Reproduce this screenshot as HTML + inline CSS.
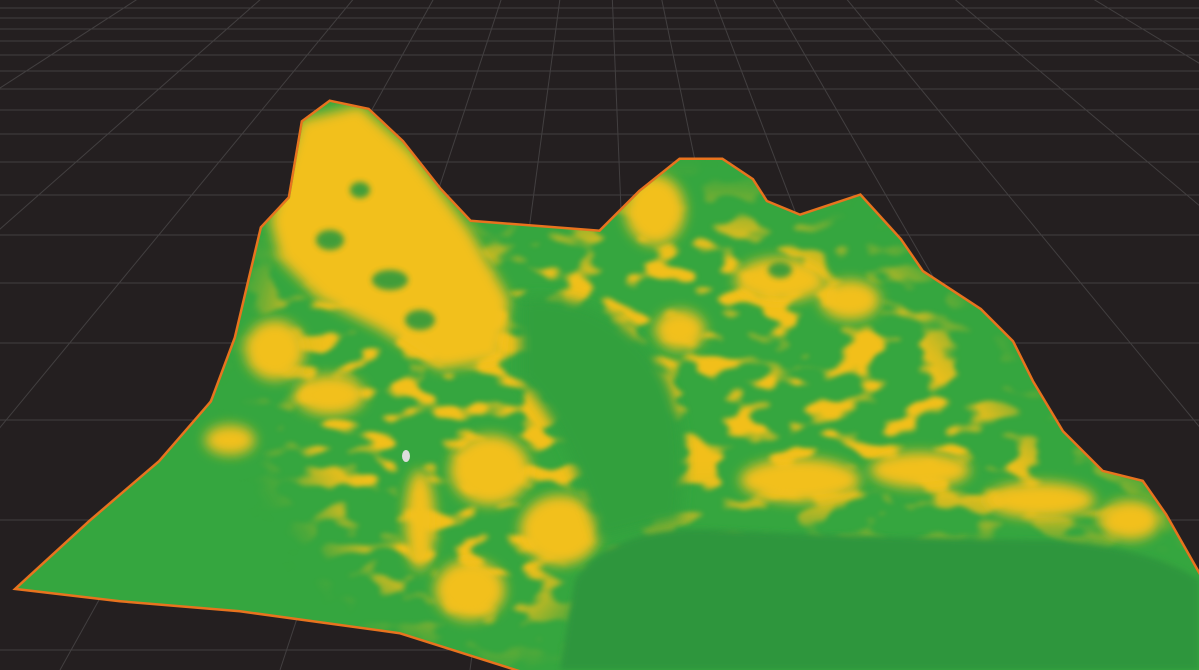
<!DOCTYPE html>
<html><head><meta charset="utf-8"><style>
html,body{margin:0;padding:0;width:1199px;height:670px;overflow:hidden;background:#241f20}
svg{display:block}
</style></head><body>
<svg width="1199" height="670" viewBox="0 0 1199 670" xmlns="http://www.w3.org/2000/svg">
<defs>
<filter id="b" x="-20%" y="-20%" width="140%" height="140%"><feGaussianBlur stdDeviation="6"/></filter>
<filter id="b2" x="-20%" y="-20%" width="140%" height="140%"><feGaussianBlur stdDeviation="3"/></filter>
<filter id="bb" x="-20%" y="-20%" width="140%" height="140%"><feGaussianBlur stdDeviation="25"/></filter>
<filter id="n" x="0" y="0" width="100%" height="100%" color-interpolation-filters="sRGB">
<feTurbulence type="fractalNoise" baseFrequency="0.025 0.045" numOctaves="2" seed="4"/>
<feColorMatrix type="matrix" values="0 0 0 0 0.95  0 0 0 0 0.75  0 0 0 0 0.1  0 0 0 8 -4.2"/>
<feGaussianBlur stdDeviation="2"/>
</filter>
<clipPath id="t"><path id="tp" d="M18,588 L90,522 L160,462 L212,402 L236,338 L262,228 L290,198 L303,122 L330,102 L368,110 L402,142 L440,190 L470,222 L600,232 L640,192 L680,160 L722,160 L752,180 L766,202 L800,216 L860,196 L900,240 L922,272 L980,310 L1012,342 L1032,382 L1062,432 L1102,472 L1142,482 L1165,515 L1199,575 L1199,670 L520,670 L400,632 L240,610 L120,600 Z"/></clipPath>
<mask id="tex"><rect width="1199" height="670" fill="#000"/><path filter="url(#bb)" fill="#fff" d="M270,270 L520,240 L640,210 L760,210 L900,270 L1040,440 L1199,540 L1199,530 L700,520 L600,540 L530,640 L380,600 L280,440 Z"/></mask>
</defs>
<rect width="1199" height="670" fill="#241f20"/>
<g stroke="#4a4748" stroke-width="1" fill="none" opacity="0.8">
<line x1="0" y1="8" x2="1199" y2="8"/><line x1="0" y1="18" x2="1199" y2="18"/><line x1="0" y1="29" x2="1199" y2="29"/>
<line x1="0" y1="41" x2="1199" y2="41"/><line x1="0" y1="55" x2="1199" y2="55"/><line x1="0" y1="71" x2="1199" y2="71"/>
<line x1="0" y1="89" x2="1199" y2="89"/><line x1="0" y1="110" x2="1199" y2="110"/><line x1="0" y1="134" x2="1199" y2="134"/>
<line x1="0" y1="162" x2="1199" y2="162"/><line x1="0" y1="195" x2="1199" y2="195"/><line x1="0" y1="235" x2="1199" y2="235"/>
<line x1="0" y1="283" x2="1199" y2="283"/><line x1="0" y1="343" x2="1199" y2="343"/><line x1="0" y1="420" x2="1199" y2="420"/>
<line x1="0" y1="520" x2="1199" y2="520"/><line x1="0" y1="650" x2="1199" y2="650"/>
<line x1="600" y1="-300" x2="-1400" y2="670"/><line x1="600" y1="-300" x2="-900" y2="670"/><line x1="600" y1="-300" x2="-500" y2="670"/>
<line x1="600" y1="-300" x2="-200" y2="670"/><line x1="600" y1="-300" x2="60" y2="670"/><line x1="600" y1="-300" x2="280" y2="670"/>
<line x1="600" y1="-300" x2="470" y2="670"/><line x1="600" y1="-300" x2="640" y2="670"/><line x1="600" y1="-300" x2="800" y2="670"/>
<line x1="600" y1="-300" x2="970" y2="670"/><line x1="600" y1="-300" x2="1160" y2="670"/><line x1="600" y1="-300" x2="1400" y2="670"/>
<line x1="600" y1="-300" x2="1750" y2="670"/><line x1="600" y1="-300" x2="2200" y2="670"/><line x1="600" y1="-300" x2="2800" y2="670"/>
</g>
<use href="#tp" fill="none" stroke="#e8731e" stroke-width="5"/>
<g clip-path="url(#t)">
<rect width="1199" height="670" fill="#35a63f"/>
<g mask="url(#tex)"><rect width="1199" height="670" filter="url(#n)"/></g>
<g filter="url(#b)" fill="#f2c01c">
<path d="M300,120 L360,105 L410,150 L470,230 L510,300 L500,360 L440,370 L380,330 L320,300 L280,260 L270,220 Z"/>
<ellipse cx="275" cy="350" rx="30" ry="30"/>
<ellipse cx="330" cy="395" rx="35" ry="20"/>
<ellipse cx="655" cy="210" rx="30" ry="35"/>
<ellipse cx="780" cy="280" rx="45" ry="22"/>
<ellipse cx="850" cy="300" rx="30" ry="20"/>
<ellipse cx="680" cy="330" rx="25" ry="20"/>
<ellipse cx="800" cy="480" rx="60" ry="22"/>
<ellipse cx="920" cy="470" rx="50" ry="18"/>
<ellipse cx="1040" cy="500" rx="55" ry="18"/>
<ellipse cx="1130" cy="520" rx="30" ry="20"/>
<ellipse cx="490" cy="470" rx="40" ry="35"/>
<ellipse cx="560" cy="530" rx="40" ry="35"/>
<ellipse cx="470" cy="590" rx="35" ry="30"/>
<ellipse cx="420" cy="520" rx="15" ry="50"/>
<ellipse cx="230" cy="440" rx="25" ry="15"/>
</g>
<g filter="url(#b2)" fill="#2f9a3d" opacity="0.9">
<ellipse cx="330" cy="240" rx="14" ry="10"/><ellipse cx="390" cy="280" rx="18" ry="10"/>
<ellipse cx="360" cy="190" rx="10" ry="8"/><ellipse cx="420" cy="320" rx="15" ry="10"/>
<ellipse cx="780" cy="270" rx="12" ry="8"/>
</g>
<path d="M520,300 C540,290 600,300 640,340 C680,380 690,440 680,520 L600,540 C580,480 560,420 520,380 Z" fill="#32a03e" filter="url(#b)"/>
<path d="M575,580 C600,540 660,525 720,530 C820,535 950,540 1050,540 C1120,545 1170,560 1199,580 L1199,670 L560,670 Z" fill="#2f963c" filter="url(#b2)"/>
</g>
<ellipse cx="406" cy="456" rx="4" ry="6" fill="#ddd"/>
</svg>
</body></html>
